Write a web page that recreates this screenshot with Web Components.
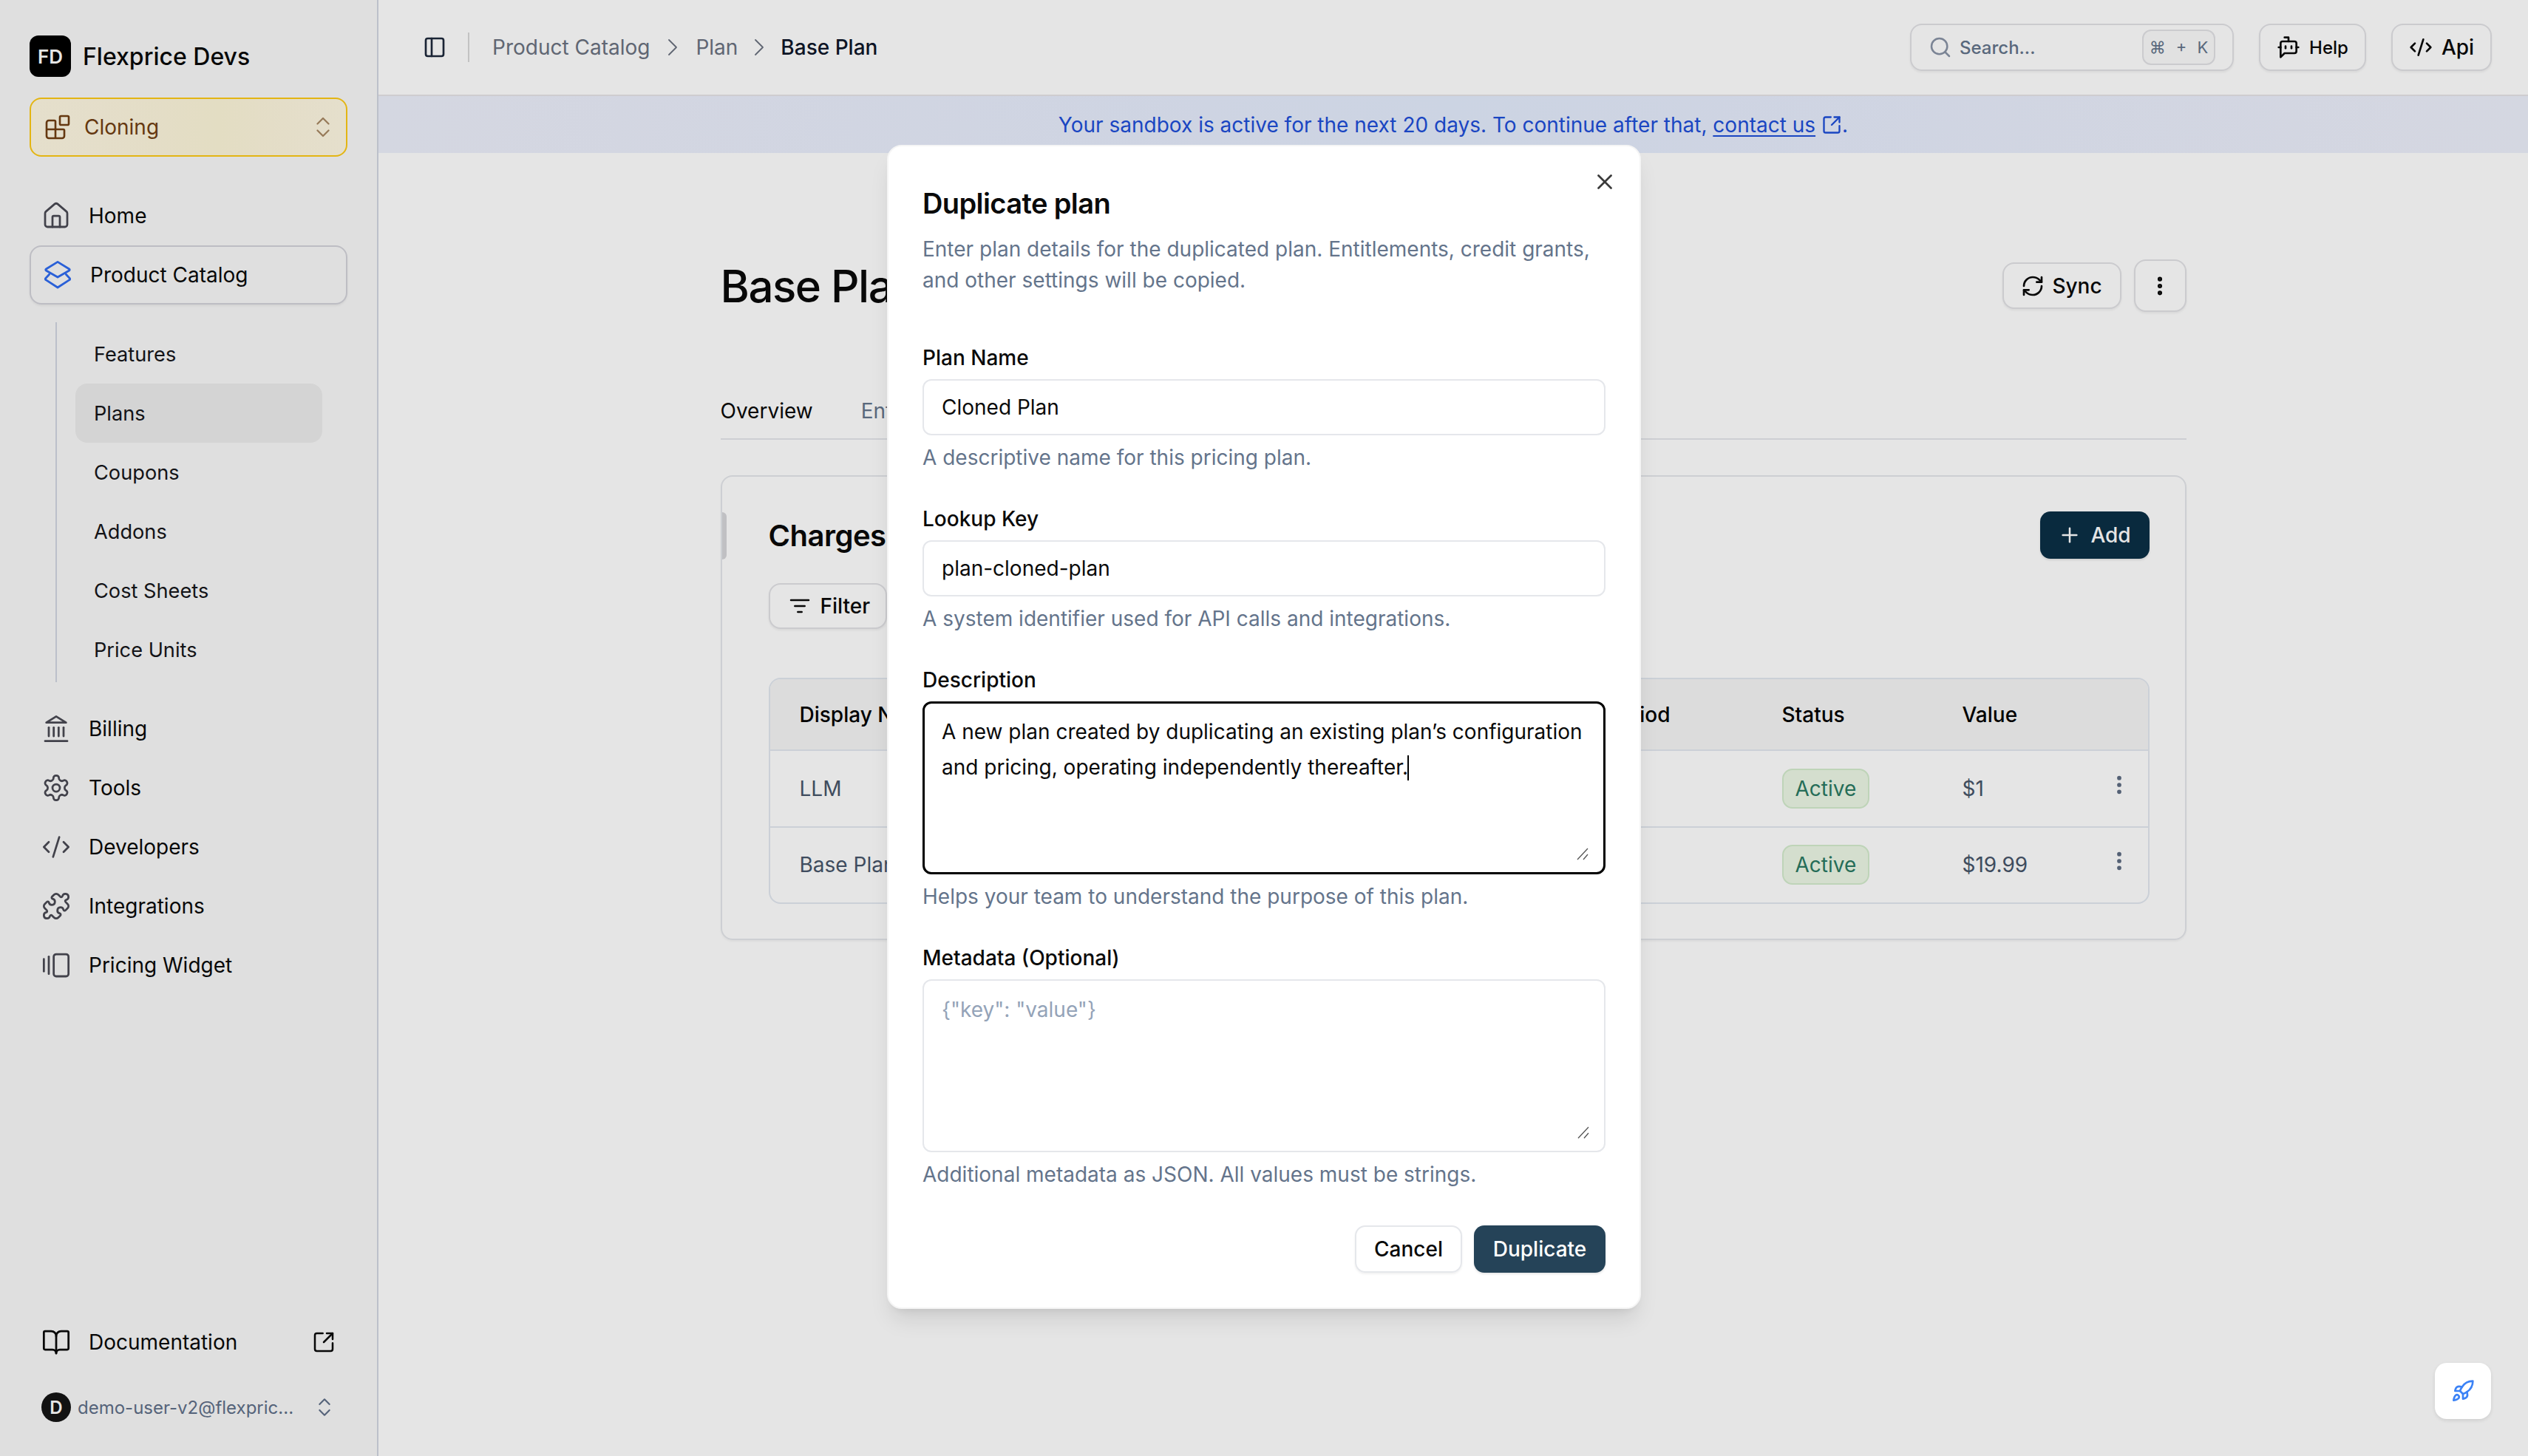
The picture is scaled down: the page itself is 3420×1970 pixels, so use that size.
<!DOCTYPE html>
<html lang="en">
<head>
<meta charset="utf-8">
<title>Flexprice</title>
<style>
html,body{margin:0;padding:0;height:100%;background:#fff}
body{font-family:Inter,"Liberation Sans",sans-serif;font-size:28px;color:#0a0a0a;-webkit-font-smoothing:antialiased;overflow:hidden}
</style>
</head>
<body>
<fp-app></fp-app>
<script>
const ICONS={
home:'<path d="M15 21v-8a1 1 0 0 0-1-1h-4a1 1 0 0 0-1 1v8"/><path d="M3 10a2 2 0 0 1 .709-1.528l7-5.999a2 2 0 0 1 2.582 0l7 5.999A2 2 0 0 1 21 10v9a2 2 0 0 1-2 2H5a2 2 0 0 1-2-2z"/>',
blocks:'<path d="M10 22V7a1 1 0 0 0-1-1H4a2 2 0 0 0-2 2v12a2 2 0 0 0 2 2h12a2 2 0 0 0 2-2v-5a1 1 0 0 0-1-1H2"/><rect x="14" y="2" width="8" height="8" rx="1"/>',
updown:'<path d="m7 15 5 5 5-5"/><path d="m7 9 5-5 5 5"/>',
layers:'<path d="M12 1.4 21.4 7.2a.7.7 0 0 1 0 1.2L12 13.8 2.6 8.4a.7.7 0 0 1 0-1.2z"/><path d="M5.2 11.6 2.4 14.6a.8.8 0 0 0 0 1.4L12 22.2 21.6 16a.8.8 0 0 0 0-1.4l-2.8-3"/>',
landmark:'<path d="M3 22h18"/><path d="M6 18v-7"/><path d="M10 18v-7"/><path d="M14 18v-7"/><path d="M18 18v-7"/><polygon points="12 2 20 7 4 7"/>',
settings:'<path d="M12.22 2h-.44a2 2 0 0 0-2 2v.18a2 2 0 0 1-1 1.73l-.43.25a2 2 0 0 1-2 0l-.15-.08a2 2 0 0 0-2.73.73l-.22.38a2 2 0 0 0 .73 2.73l.15.1a2 2 0 0 1 1 1.72v.51a2 2 0 0 1-1 1.74l-.15.09a2 2 0 0 0-.73 2.73l.22.38a2 2 0 0 0 2.73.73l.15-.08a2 2 0 0 1 2 0l.43.25a2 2 0 0 1 1 1.73V20a2 2 0 0 0 2 2h.44a2 2 0 0 0 2-2v-.18a2 2 0 0 1 1-1.73l.43-.25a2 2 0 0 1 2 0l.15.08a2 2 0 0 0 2.73-.73l.22-.39a2 2 0 0 0-.73-2.73l-.15-.08a2 2 0 0 1-1-1.74v-.5a2 2 0 0 1 1-1.74l.15-.09a2 2 0 0 0 .73-2.73l-.22-.38a2 2 0 0 0-2.73-.73l-.15.08a2 2 0 0 1-2 0l-.43-.25a2 2 0 0 1-1-1.73V4a2 2 0 0 0-2-2z"/><circle cx="12" cy="12" r="3"/>',
code:'<path d="m18 16 4-4-4-4"/><path d="m6 8-4 4 4 4"/><path d="m14.5 4-5 16"/>',
puzzle:'<path d="M15.39 4.39a1 1 0 0 0 1.68-.474 2.5 2.5 0 1 1 3.014 3.015 1 1 0 0 0-.474 1.68l1.683 1.682a2.414 2.414 0 0 1 0 3.414L19.61 15.39a1 1 0 0 1-1.68-.474 2.5 2.5 0 1 0-3.014 3.015 1 1 0 0 1 .474 1.68l-1.683 1.682a2.414 2.414 0 0 1-3.414 0L8.61 19.61a1 1 0 0 0-1.68.474 2.5 2.5 0 1 1-3.014-3.015 1 1 0 0 0 .474-1.68l-1.683-1.682a2.414 2.414 0 0 1 0-3.414L4.39 8.61a1 1 0 0 1 1.68.474 2.5 2.5 0 1 0 3.014-3.015 1 1 0 0 1-.474-1.68l1.683-1.682a2.414 2.414 0 0 1 3.414 0z"/>',
gallery:'<path d="M2 7v10"/><path d="M6 5v14"/><rect width="12" height="18" x="10" y="3" rx="2"/>',
book:'<path d="M12 7v14"/><path d="M3 18a1 1 0 0 1-1-1V4a1 1 0 0 1 1-1h5a4 4 0 0 1 4 4 4 4 0 0 1 4-4h5a1 1 0 0 1 1 1v13a1 1 0 0 1-1 1h-6a3 3 0 0 0-3 3 3 3 0 0 0-3-3z"/>',
external:'<path d="M21 13v6a2 2 0 0 1-2 2H5a2 2 0 0 1-2-2V5a2 2 0 0 1 2-2h6"/><path d="m21 3-9 9"/><path d="M15 3h6v6"/>',
panel:'<rect width="18" height="18" x="3" y="3" rx="2"/><path d="M9 3v18"/>',
chevron:'<path d="m9 18 6-6-6-6"/>',
search:'<circle cx="11" cy="11" r="8"/><path d="m21 21-4.3-4.3"/>',
bot:'<path d="M12 6V2H8"/><path d="m8 18-4 4V8a2 2 0 0 1 2-2h12a2 2 0 0 1 2 2v8a2 2 0 0 1-2 2Z"/><path d="M2 12h2"/><path d="M9 11v2"/><path d="M15 11v2"/><path d="M20 12h2"/>',
sync:'<path d="M3 12a9 9 0 0 1 9-9 9.75 9.75 0 0 1 6.74 2.74L21 8"/><path d="M21 3v5h-5"/><path d="M21 12a9 9 0 0 1-9 9 9.75 9.75 0 0 1-6.74-2.74L3 16"/><path d="M8 16H3v5"/>',
dots:'<circle cx="12" cy="12" r="1"/><circle cx="12" cy="5" r="1"/><circle cx="12" cy="19" r="1"/>',
filter:'<path d="M3 6h18"/><path d="M7 12h10"/><path d="M10 18h4"/>',
plus:'<path d="M5 12h14"/><path d="M12 5v14"/>',
x:'<path d="M18 6 6 18"/><path d="m6 6 12 12"/>',
rocket:'<path d="M4.5 16.5c-1.5 1.26-2 5-2 5s3.74-.5 5-2c.71-.84.7-2.13-.09-2.91a2.18 2.18 0 0 0-2.91-.09z"/><path d="m12 15-3-3a22 22 0 0 1 2-3.95A12.88 12.88 0 0 1 22 2c0 2.72-.78 7.5-6 11a22.35 22.35 0 0 1-4 2z"/><path d="M9 12H4s.55-3.03 2-4c1.62-1.08 5 0 5 0"/><path d="M12 15v5s3.03-.55 4-2c1.08-1.62 0-5 0-5"/>'
};
class Base extends HTMLElement{
  constructor(){super();this.attachShadow({mode:'open'});}
  connectedCallback(){if(!this._done){this._done=1;this.shadowRoot.innerHTML=this.render();}}
  a(n,d=''){return this.hasAttribute(n)?this.getAttribute(n):d;}
}
const def=(n,r)=>customElements.define(n,class extends Base{render(){return r.call(this);}});
const ic=(n,s=40,w=1.75)=>`<fp-icon name="${n}" size="${s}" sw="${w}"></fp-icon>`;

def('fp-icon',function(){const s=this.a('size','40'),w=this.a('sw','2');
  return `<style>:host{display:inline-flex;flex:none;width:${s}px;height:${s}px}svg{display:block}</style>
  <svg width="${s}" height="${s}" viewBox="0 0 24 24" fill="none" stroke="currentColor" stroke-width="${w}" stroke-linecap="round" stroke-linejoin="round">${ICONS[this.a('name')]}</svg>`;});

def('fp-nav-item',function(){const act=this.hasAttribute('active');
  return `<style>
  :host{display:flex;align-items:center;height:80px;box-sizing:border-box;padding-left:16px;gap:24px;border-radius:16px;color:#0a0a0a}
  :host([active]){border:2px solid #d3d3da;box-shadow:0 2px 3px rgba(0,0,0,.06);color:#0a0a0a}
  .i{display:flex;color:${act?'#2f6bf0':'#4a4a54'}}
  :host([dark]) .i{color:#0a0a0a}
  .end{margin-left:auto;margin-right:16px;display:flex}
  </style><span class="i">${act?ic(this.a('icon'),40,1.7):ic(this.a('icon'),40,1.65)}</span><slot></slot>${this.hasAttribute('ext')?`<span class="end">${ic('external',32,1.9)}</span>`:''}`;});

def('fp-sub-item',function(){return `<style>
  :host{display:flex;align-items:center;height:80px;width:334px;box-sizing:border-box;padding-left:25px;border-radius:16px;color:#16161a;font-size:27.2px}
  :host([active]){background:#ececec}
  </style><slot></slot>`;});

def('fp-sidebar',function(){return `<style>
  :host{display:flex;flex-direction:column;width:512px;height:1970px;flex:none;box-sizing:border-box;padding:48px 40px 26px;background:#f9f9f9;border-right:2px solid #d2d6e1}
  .brand{display:flex;align-items:center;gap:16px;height:56px;font-size:32px;font-weight:500;color:#0a0a0a}
  .logo{width:56px;height:56px;border-radius:12px;background:#000;color:#fff;font-size:26px;font-weight:600;display:flex;align-items:center;justify-content:center}
  .env{margin-top:28px;height:80px;box-sizing:border-box;border:2px solid #fdca16;border-radius:16px;background:linear-gradient(90deg,#fff9e4,#fdf6da 60%,#fff9e4);display:flex;align-items:center;padding-left:18px;gap:18px;color:#713f12}
  .env .ud{margin-left:auto;margin-right:13px;display:flex;opacity:.6}
  nav{display:flex;flex-direction:column;margin-top:40px}
  .sub{margin:24px 0 23px 35px;border-left:2px solid #d2d6e1;padding:3px 0 4px 25px}
  .bottom{margin-top:auto;display:flex;flex-direction:column;gap:8px}
  .user{display:flex;align-items:center;height:80px;box-sizing:border-box;padding-left:16px;gap:9px;font-size:24px;color:#5f6f88}
  .av{width:40px;height:40px;border-radius:50%;background:#151515;color:#fff;font-size:24px;font-weight:600;display:flex;align-items:center;justify-content:center}
  .user .ud{margin-left:auto;display:flex;margin-right:15px}
  </style>
  <div class="brand"><span class="logo">FD</span>Flexprice Devs</div>
  <div class="env">${ic('blocks',36,1.75)}<span>Cloning</span><span class="ud">${ic('updown',36,1.5)}</span></div>
  <nav>
    <fp-nav-item icon="home">Home</fp-nav-item>
    <fp-nav-item icon="layers" active>Product Catalog</fp-nav-item>
    <div class="sub">
      <fp-sub-item>Features</fp-sub-item>
      <fp-sub-item active>Plans</fp-sub-item>
      <fp-sub-item>Coupons</fp-sub-item>
      <fp-sub-item>Addons</fp-sub-item>
      <fp-sub-item>Cost Sheets</fp-sub-item>
      <fp-sub-item>Price Units</fp-sub-item>
    </div>
    <fp-nav-item icon="landmark">Billing</fp-nav-item>
    <fp-nav-item icon="settings">Tools</fp-nav-item>
    <fp-nav-item icon="code">Developers</fp-nav-item>
    <fp-nav-item icon="puzzle">Integrations</fp-nav-item>
    <fp-nav-item icon="gallery">Pricing Widget</fp-nav-item>
  </nav>
  <div class="bottom">
    <fp-nav-item icon="book" dark ext>Documentation</fp-nav-item>
    <div class="user"><span class="av">D</span><span>demo-user-v2@flexpric...</span><span class="ud">${ic('updown',32,1.6)}</span></div>
  </div>`;});

def('fp-outline-btn',function(){return `<style>
  :host{display:inline-flex;align-items:center;justify-content:center;box-sizing:border-box;border:2px solid #e2e2e6;border-radius:16px;background:#fff;box-shadow:0 2px 3px rgba(0,0,0,.06);font-weight:500;color:#0a0a0a;flex:none}
  </style><slot></slot>`;});

def('fp-topbar',function(){return `<style>
  :host{display:flex;align-items:center;height:130px;box-sizing:border-box;padding:0 49px 0 60px;border-bottom:2px solid #e6e4e7;background:#fff}
  .t{display:flex;color:#1e293b}
  .div{width:2px;height:40px;background:#d8d8d8;margin:0 31px 0 29px}
  .c{color:#6b7280}.cur{color:#0f172a;font-weight:450}
  .sep{display:flex;margin:0 11px;color:#6b7280}
  .sep.b{margin:0 9px}
  .search{margin-left:auto;width:438px;height:64px;box-sizing:border-box;border:2px solid #e2e2e6;border-radius:16px;box-shadow:0 2px 3px rgba(0,0,0,.06);display:flex;align-items:center;padding:0 23px;gap:10px;font-size:24px;color:#64748b;font-weight:450}
  .search .si{display:flex;color:#8a94a6}
  kbd{margin-left:auto;width:99px;height:48px;box-sizing:border-box;border:2px solid #e2e2e6;border-radius:12px;background:#fbfbfb;font:inherit;font-size:22px;color:#64748b;display:flex;align-items:center;justify-content:center;word-spacing:8px;font-weight:400}
  .r{display:flex;gap:34px;margin-left:34px}
  .help{width:145px;height:64px;gap:12px;font-size:24px}
  .api{width:136px;height:64px;gap:12px}
  </style>
  <span class="t">${ic('panel',32,2)}</span><span class="div"></span>
  <span class="c">Product Catalog</span><span class="sep">${ic('chevron',40,1.1)}</span>
  <span class="c">Plan</span><span class="sep b">${ic('chevron',40,1.1)}</span>
  <span class="cur">Base Plan</span>
  <div class="search"><span class="si">${ic('search',32,1.9)}</span><span>Search...</span><kbd>⌘ + K</kbd></div>
  <div class="r"><fp-outline-btn class="help">${ic('bot',32,2)}Help</fp-outline-btn><fp-outline-btn class="api">${ic('code',32,2)}Api</fp-outline-btn></div>`;});

def('fp-banner',function(){return `<style>
  :host{display:flex;align-items:center;justify-content:center;height:77px;gap:0;background:linear-gradient(90deg,#edf0fb,#e4ecfd 50%,#edf0fb);color:#1d4ed8;white-space:pre}
  a{color:inherit;text-decoration:underline;text-underline-offset:4px}
  .e{display:inline-flex;margin:0 0 0 8px}
  </style><span>Your sandbox is active for the next 20 days. To continue after that, </span><a>contact us</a><span class="e">${ic('external',28,2)}</span><span>.</span>`;});

def('fp-badge',function(){return `<style>
  :host{display:inline-flex;align-items:center;height:54px;box-sizing:border-box;padding:0 16px;border:2px solid #d4eccd;border-radius:14px;background:#edf8e6;color:#2a7a63}
  </style><slot></slot>`;});

def('fp-charges-table',function(){
  const row=(a,b,c,d)=>`<div class="row"><div class="name">${a}</div><div>${b}</div><div><fp-badge>${c}</fp-badge></div><div class="val">${d}</div><div class="more">${ic('dots',32,2.3)}</div></div>`;
  return `<style>
  :host{display:block;border:2px solid #e2e8f0;border-radius:16px;overflow:hidden;color:#475569}
  .row{display:grid;grid-template-columns:1003px 326px 244px 1fr 55px;align-items:center;height:103.5px;border-top:2px solid #e2e8f0;box-sizing:border-box}
  .row>div{padding-left:40px;white-space:nowrap}
  .row>.more{padding:0;display:flex;color:#5d6b82;transform:translateY(-5px)}
  .head{height:95px;border-top:0;background:#f5f5f5;color:#000;font-weight:500}
  </style>
  <div class="row head"><div>Display Name</div><div>Billing Period</div><div>Status</div><div>Value</div><div></div></div>
  ${row('LLM','Monthly','Active','$1')}${row('Base Plan','Monthly','Active','$19.99')}`;});

def('fp-plan-page',function(){return `<style>
  :host{display:block;width:1983px;margin:144px auto 0;box-sizing:border-box}
  .head{display:flex;align-items:center;height:71px}
  h1{margin:0;font-size:60px;line-height:72px;font-weight:550;color:#0a0a0a;letter-spacing:-1.5px}
  .acts{margin-left:auto;display:flex;align-items:center;gap:17px}
  .sync{width:161px;height:63px;gap:10px}
  .dots{width:71px;height:71px}
  .tabs{margin-top:113px;display:flex;gap:65px;border-bottom:2px solid #e5e7eb;padding:0 0 16px 0;line-height:42px;color:#64748b}
  .tabs .on{color:#0a0a0a}
  .card{position:relative;margin-top:48px;border:2px solid #e5e7eb;border-radius:16px;padding:47px 48px 47px 63px;box-shadow:0 2px 3px rgba(0,0,0,.04)}
  .accent{position:absolute;left:0;top:48px;width:6px;height:64px;background:#d6d6da;border-radius:0 6px 6px 0}
  .top{display:flex;align-items:center;height:64px}
  h2{margin:0;font-size:40px;font-weight:600;color:#0a0a0a;letter-spacing:-.5px}
  .add{margin-left:auto;display:flex;align-items:center;justify-content:center;gap:12px;width:148px;height:64px;border-radius:14px;background:#0b2f46;color:#fff;font-weight:500;box-shadow:0 2px 3px rgba(0,0,0,.1)}
  .filter{margin-top:33px;width:160px;height:62px;gap:12px;justify-content:flex-start;padding-left:24px;display:flex}
  fp-charges-table{margin-top:66px}
  </style>
  <div class="head"><h1>Base Plan</h1><div class="acts"><fp-outline-btn class="sync">${ic('sync',32,2)}Sync</fp-outline-btn><fp-outline-btn class="dots">${ic('dots',32,2.6)}</fp-outline-btn></div></div>
  <div class="tabs"><span class="on">Overview</span><span>Entitlements</span></div>
  <div class="card"><span class="accent"></span>
    <div class="top"><h2>Charges</h2><div class="add">${ic('plus',32,1.9)}Add</div></div>
    <fp-outline-btn class="filter">${ic('filter',32,1.9)}Filter</fp-outline-btn>
    <fp-charges-table></fp-charges-table>
  </div>`;});

def('fp-field',function(){const multi=this.hasAttribute('multi'),foc=this.hasAttribute('focused');
  return `<style>
  :host{display:block}
  label{display:block;line-height:40px;font-weight:500;color:#0a0a0a;margin-bottom:9px}
  .box{position:relative;box-sizing:border-box;height:${multi?234:76}px;border:2px solid ${foc?'#000':'#e5e7eb'};${foc?'border-width:3px;':''}border-radius:12px;padding:${multi?(foc?'14px 23px':'15px 24px'):'0 24px'};display:${multi?'block':'flex'};align-items:center;line-height:48px;color:#0a0a0a;background:#fff}
  .caret{display:inline-block;width:2px;height:34px;background:#000;vertical-align:-8px;margin-left:-1px}
  svg{position:absolute;right:20px;bottom:16px}
  p{margin:10px 0 0;line-height:40px;color:#64748b}
  </style>
  <label>${this.a('label')}</label>
  <div class="box"><slot></slot>${foc?'<span class="caret"></span>':''}${multi?'<svg width="17" height="17" viewBox="0 0 17 17" fill="none" stroke="#555" stroke-width="1.3"><path d="M2 16 16 1M10 16 16 9"/></svg>':''}</div>
  <p>${this.a('help')}</p>`;});

def('fp-modal',function(){return `<style>
  :host{display:block;position:relative;width:1020px;box-sizing:border-box;background:#fff;border:2px solid #f5f5f5;border-radius:20px;padding:46px 46px 47px;box-shadow:0 20px 30px -6px rgba(0,0,0,.1),0 8px 12px -8px rgba(0,0,0,.1)}
  .x{position:absolute;top:31px;right:30px;display:flex;color:#3a3a3a}
  h3{margin:0;font-size:38px;line-height:62px;font-weight:600;letter-spacing:-.6px;color:#0a0a0a}
  .d{margin:10px 0 0;line-height:42px;color:#64748b}
  .f{margin-top:64px;display:flex;flex-direction:column;gap:43px}
  .btns{margin-top:49px;display:flex;justify-content:flex-end;gap:16px}
  .b{height:64px;box-sizing:border-box;border-radius:14px;display:flex;align-items:center;justify-content:center;font-weight:500}
  .c{width:145px;border:2px solid #e5e7eb;box-shadow:0 2px 3px rgba(0,0,0,.06);color:#0a0a0a}
  .p{width:178px;background:#254358;color:#fff;box-shadow:0 2px 3px rgba(0,0,0,.1)}
  </style>
  <span class="x">${ic('x',34,1.9)}</span>
  <h3>Duplicate plan</h3>
  <p class="d">Enter plan details for the duplicated plan. Entitlements, credit grants, and other settings will be copied.</p>
  <div class="f">
    <fp-field label="Plan Name" help="A descriptive name for this pricing plan.">Cloned Plan</fp-field>
    <fp-field label="Lookup Key" help="A system identifier used for API calls and integrations.">plan-cloned-plan</fp-field>
    <fp-field label="Description" help="Helps your team to understand the purpose of this plan." multi focused>A new plan created by duplicating an existing plan’s configuration and pricing, operating independently thereafter.</fp-field>
    <fp-field label="Metadata (Optional)" help="Additional metadata as JSON. All values must be strings." multi><span style="color:#94a3b8">{"key": "value"}</span></fp-field>
  </div>
  <div class="btns"><div class="b c">Cancel</div><div class="b p">Duplicate</div></div>`;});

def('fp-rocket',function(){return `<style>
  :host{position:absolute;right:50px;bottom:50px;width:76px;height:76px;border-radius:16px;background:#fff;color:#3b82f6;display:flex;align-items:center;justify-content:center;box-shadow:0 2px 5px rgba(0,0,0,.1);z-index:3}
  </style>${ic('rocket',32,2)}`;});

def('fp-app',function(){return `<style>
  :host{display:flex;position:relative;width:3420px;height:1970px;overflow:hidden}
  main{flex:1;min-width:0;background:#fff}
  .overlay{position:absolute;inset:0;box-sizing:border-box;padding-bottom:4px;background:rgba(0,0,0,.1);display:flex;align-items:center;justify-content:center;z-index:2}
  </style>
  <fp-sidebar></fp-sidebar>
  <main><fp-topbar></fp-topbar><fp-banner></fp-banner><fp-plan-page></fp-plan-page></main>
  <div class="overlay"><fp-modal></fp-modal></div>
  <fp-rocket></fp-rocket>`;});
</script>
</body>
</html>
